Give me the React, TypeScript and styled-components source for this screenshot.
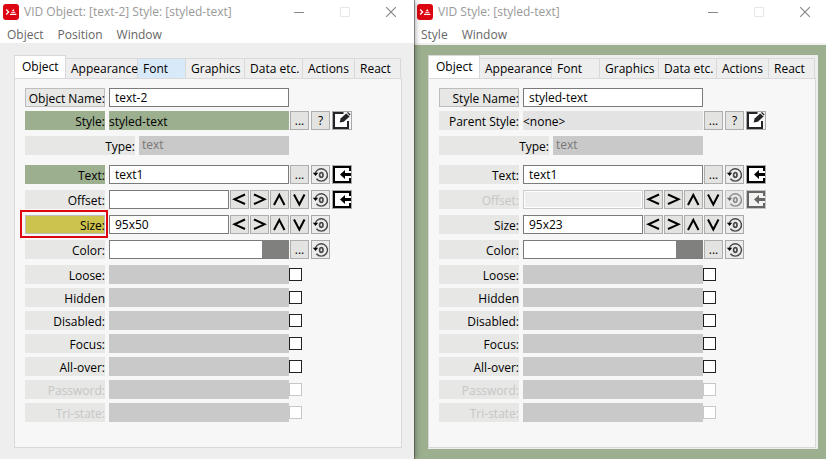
import React from "react";
import styled, { createGlobalStyle, css } from "styled-components";

const GREEN = "#9caf8f";
const FONT = '"Open Sans", "Noto Sans", sans-serif';

const GlobalStyle = createGlobalStyle`
  *, *::before, *::after { box-sizing: border-box; }
  body {
    margin: 0;
    font-family: ${FONT};
    font-size: 12px;
    line-height: 16px;
    color: #000;
    background: ${GREEN};
  }
  button, input { font: inherit; color: inherit; margin: 0; padding: 0; border-radius: 0; }
`;

const Desktop = styled.div`
  display: flex;
  min-height: 100vh;
  overflow: hidden;
`;

const Window = styled.section<{ $tint?: boolean; $grow: number }>`
  display: flex;
  flex-direction: column;
  flex: ${(p) => p.$grow} 1 0;
  min-width: 0;
  background: ${(p) => (p.$tint ? GREEN : "#eeeeee")};
  ${(p) =>
    !p.$tint &&
    css`
      z-index: 1;
      box-shadow: 1px 0 0 rgba(60, 60, 60, 0.5), 1px 0 6px rgba(0, 0, 0, 0.4);
    `}
`;

const TitleBar = styled.header`
  display: flex;
  align-items: center;
  height: 24px;
  padding-left: 3px;
  background: #fff;
`;

const Title = styled.h1`
  flex: 1;
  margin: 0 0 0 5px;
  font-size: 12px;
  font-weight: 400;
  line-height: 24px;
  color: #999;
  white-space: nowrap;
`;

const WindowButton = styled.button`
  display: grid;
  place-items: center;
  width: 46px;
  height: 24px;
  border: 0;
  background: none;
`;

const WindowButtons = styled.div<{ $bleed: number }>`
  display: flex;
  margin-right: -${(p) => p.$bleed}px;
`;

const MenuBar = styled.nav<{ $height: number }>`
  display: flex;
  gap: 14px;
  height: ${(p) => p.$height}px;
  padding-left: 7px;
  background: #fff;
  border-bottom: ${(p) => p.$height - 19}px solid #f0f0f0;
`;

const MenuItem = styled.button`
  height: 21px;
  border: 0;
  background: none;
  color: #666;
  line-height: 21px;
`;

const TabControl = styled.div<{ $tint?: boolean }>`
  margin: ${(p) => (p.$tint ? "10px 8px 10px 14px" : "12px 12px 11px 14px")};
  padding: ${(p) => (p.$tint ? "0 2px 1px 0" : "0")};
  background: #eeeeee;
`;

const TabList = styled.div`
  display: grid;
  grid-template-columns: 52fr 72fr 48fr 59fr 58fr 52fr 46fr;
  align-items: end;
  height: 23px;
  margin-right: 1px;
`;

const Tab = styled.button<{ $active?: boolean; $hot?: boolean }>`
  min-width: 0;
  height: ${(p) => (p.$active ? 23 : 20)}px;
  padding: 0 0 0 ${(p) => (p.$active ? 7 : 5)}px;
  border: 1px solid #d9d9d9;
  border-bottom: 0;
  border-left-width: ${(p) => (p.$active ? 1 : 0)}px;
  background: ${(p) => (p.$active ? "#fff" : p.$hot ? "#d8eaf9" : "#eeeeee")};
  text-align: left;
  line-height: 20px;
  white-space: nowrap;
`;

const Panel = styled.form`
  padding: 9px 49px 25px 10px;
  border: 1px solid #d9d9d9;
  background: #f7f7f7;
`;

const Row = styled.div<{ $gap?: number }>`
  display: flex;
  height: 19px;
  margin-bottom: ${(p) => p.$gap ?? 4}px;
`;

const Label = styled.label<{ $tone?: string; $framed?: boolean; $wide?: boolean; $off?: boolean }>`
  position: relative;
  flex: none;
  width: ${(p) => (p.$wide ? 110 : 80)}px;
  margin-right: 4px;
  background: ${(p) => p.$tone ?? "#e7e7e5"};
  box-shadow: ${(p) => (p.$framed ? "inset 0 0 0 1px #bdbdbd" : "none")};
  color: ${(p) => (p.$off ? "#c6c6c6" : "#000")};
  text-align: right;
  line-height: 21px;
  white-space: nowrap;
`;

const Highlight = styled.span`
  position: absolute;
  inset: -5px -3px -4px -5px;
  border: 2px solid #dd0510;
`;

const Input = styled.input<{ $tone?: string; $muted?: boolean }>`
  flex: 1;
  min-width: 0;
  height: 19px;
  padding: 0 0 0 5px;
  border: 1px solid #7a7a7a;
  background: #fff;
  line-height: 17px;
  &:disabled {
    border-color: #cccccc;
    background: #eeeeee;
    box-shadow: inset 0 0 0 1px #fff;
  }
  ${(p) =>
    p.$tone &&
    css`
      border: 0;
      padding: 2px 0 0;
      background: ${p.$tone};
    `}
  ${(p) =>
    p.$muted &&
    css`
      padding: 0 0 3px 3px;
      color: #777;
    `}
`;

const Swatch = styled.button`
  flex: none;
  width: 27px;
  height: 19px;
  margin-left: -1px;
  border: 0;
  border-bottom: 1px solid #7a7a7a;
  background: #80807e;
`;

const Bar = styled.div`
  flex: 1;
  background: #c9c9c9;
`;

const Check = styled.input`
  appearance: none;
  flex: none;
  align-self: center;
  width: 13px;
  height: 13px;
  margin-right: 50px;
  border: 1px solid #222;
  background: #fff;
  &:disabled { border-color: #c8c8c8; }
`;

const Actions = styled.div<{ $short?: boolean }>`
  display: flex;
  flex: none;
  gap: 2px;
  width: ${(p) => (p.$short ? 42 : 63)}px;
  padding-left: 1px;
`;

const Arrows = styled.div`
  display: flex;
  flex: none;
  gap: 1px;
  padding-left: 1px;
  padding-right: 1px;
`;

const ToolButton = styled.button<{ $wide?: boolean }>`
  display: grid;
  place-items: center;
  width: ${(p) => (p.$wide ? 20 : 19)}px;
  height: 19px;
  border: 1px solid #adadad;
  background: #e3e3e2;
  line-height: 17px;
  svg { display: block; }
  &:disabled svg { opacity: 0.55; }
`;

const IconButton = styled(ToolButton)`
  border: 0;
`;

const Logo = () => (
  <svg width="16" height="16" viewBox="0 0 16 16" aria-hidden="true">
    <rect width="16" height="16" rx="3" fill="#dc0512" />
    <path d="M3.2 5.5 5.6 8 3.2 10.5" fill="none" stroke="#fff" strokeWidth="1.3" />
    <path d="M10.2 5 11.4 7H9ZM8.6 7.8h3.3l.6 1H8ZM7.4 9.7h5.6l.6 1.2H6.8Z" fill="#fff" />
  </svg>
);

const EditIcon = () => (
  <svg width="20" height="19" viewBox="0 0 20 19" aria-hidden="true">
    <rect x=".5" y=".5" width="19" height="18" fill="#f4f4f4" stroke="#a8a8a8" />
    <path d="M11.5 2H2v15h14v-7" fill="#fff" stroke="#252529" strokeWidth="2" />
    <path d="M7.6 11.6 8.6 7.6 14.2 2.4 17.6 5.4 11.8 10.8Z" fill="#252529" />
    <path d="m15 1.8 1-.9 2.6 2.5-.9 1Z" fill="#252529" />
  </svg>
);

const ResetIcon = () => (
  <svg width="19" height="19" viewBox="0 0 19 19" aria-hidden="true">
    <rect x=".5" y=".5" width="18" height="18" fill="#ececec" stroke="#a8a8a8" />
    <path d="M4.2 8.6a6.2 6.2 0 1 1 1.2 5.2" fill="none" stroke="#4a4a4a" strokeWidth="1.4" />
    <ellipse cx="10.3" cy="10" rx="1.7" ry="2.3" fill="none" stroke="#4a4a4a" strokeWidth="1.7" />
    <path d="M1.8 7.8h5.4L4.6 11Z" fill="#000" />
  </svg>
);

const ImportIcon = () => (
  <svg width="20" height="19" viewBox="0 0 20 19" aria-hidden="true">
    <rect x=".5" y=".5" width="19" height="18" fill="#fff" stroke="#a8a8a8" />
    <path d="M18 6V2H2v15h16v-4" fill="#fff" stroke="#000" strokeWidth="2" />
    <path d="M8 9.5 13 5v3h6v3h-6v3Z" fill="#000" />
  </svg>
);

const ARROWS: [string, string][] = [
  ["Left", "M15 4.5 4.5 9.3 15 14"],
  ["Right", "M4 4.5 14.5 9.3 4 14"],
  ["Up", "M4 15 9.3 5 14.5 15"],
  ["Down", "M4 4.5 9.3 14.5 14.5 4.5"],
];

const ArrowSet = () => (
  <Arrows>
    {ARROWS.map(([name, d]) => (
      <ToolButton type="button" key={name} aria-label={name}>
        <svg width="17" height="17" viewBox="1 1 17 17" aria-hidden="true">
          <path d={d} fill="none" stroke="#000" strokeWidth="2" />
        </svg>
      </ToolButton>
    ))}
  </Arrows>
);

const Reset = ({ disabled }: { disabled?: boolean }) => (
  <IconButton type="button" aria-label="Reset" disabled={disabled}>
    <ResetIcon />
  </IconButton>
);

const Import = ({ disabled }: { disabled?: boolean }) => (
  <IconButton type="button" aria-label="Import" $wide disabled={disabled}>
    <ImportIcon />
  </IconButton>
);

const TABS = ["Object", "Appearance", "Font", "Graphics", "Data etc.", "Actions", "React"];

const FLAGS = ["Loose:", "Hidden", "Disabled:", "Focus:", "All-over:", "Password:", "Tri-state:"];

interface InspectorProps {
  id: string;
  tint?: boolean;
  title: string;
  menus: string[];
  nameLabel: string;
  name: string;
  parentLabel: string;
  parent: string;
  size: string;
}

const Inspector = ({ id, tint, title, menus, nameLabel, name, parentLabel, parent, size }: InspectorProps) => (
  <Window $tint={tint} $grow={tint ? 412 : 414}>
    <TitleBar>
      <Logo />
      <Title>{title}</Title>
      <WindowButtons $bleed={tint ? 2 : 0}>
        <WindowButton type="button" aria-label="Minimize">
          <svg width="10" height="10" aria-hidden="true"><path d="M0 5.5h10" stroke="#888" /></svg>
        </WindowButton>
        <WindowButton type="button" aria-label="Maximize">
          <svg width="10" height="10" aria-hidden="true"><path d="M.5.5h9v9h-9z" fill="none" stroke="#e6e6e6" /></svg>
        </WindowButton>
        <WindowButton type="button" aria-label="Close">
          <svg width="10" height="10" aria-hidden="true"><path d="m0 0 10 10M10 0 0 10" stroke="#888" strokeWidth="1.2" /></svg>
        </WindowButton>
      </WindowButtons>
    </TitleBar>
    <MenuBar $height={tint ? 21 : 19}>
      {menus.map((m) => (
        <MenuItem type="button" key={m}>{m}</MenuItem>
      ))}
    </MenuBar>
    <TabControl $tint={tint}>
      <TabList role="tablist">
        {TABS.map((t, i) => (
          <Tab
            type="button"
            role="tab"
            key={t}
            aria-selected={i === 0}
            $active={i === 0}
            $hot={!tint && t === "Font"}
          >
            {t}
          </Tab>
        ))}
      </TabList>
      <Panel>
        <Row>
          <Label htmlFor={id + "name"} $framed>{nameLabel}</Label>
          <Input id={id + "name"} defaultValue={name} />
          <Actions />
        </Row>
        <Row $gap={6}>
          <Label htmlFor={id + "style"} $tone={tint ? undefined : GREEN}>{parentLabel}</Label>
          <Input id={id + "style"} readOnly value={parent} $tone={tint ? "#e3e3e3" : GREEN} />
          <Actions>
            <ToolButton type="button" aria-label="Browse styles">...</ToolButton>
            <ToolButton type="button" aria-label="Help">?</ToolButton>
            <IconButton type="button" aria-label="Edit" $wide><EditIcon /></IconButton>
          </Actions>
        </Row>
        <Row $gap={10}>
          <Label htmlFor={id + "type"} $wide>Type:</Label>
          <Input id={id + "type"} readOnly value="text" $tone="#c9c9c9" $muted />
          <Actions />
        </Row>
        <Row $gap={6}>
          <Label htmlFor={id + "text"} $tone={tint ? undefined : GREEN}>Text:</Label>
          <Input id={id + "text"} defaultValue="text1" />
          <Actions>
            <ToolButton type="button" aria-label="Edit text">...</ToolButton>
            <Reset />
            <Import />
          </Actions>
        </Row>
        <Row $gap={6}>
          <Label htmlFor={id + "offset"} $off={tint}>Offset:</Label>
          <Input id={id + "offset"} disabled={tint} />
          <ArrowSet />
          <Actions $short>
            <Reset disabled={tint} />
            <Import disabled={tint} />
          </Actions>
        </Row>
        <Row $gap={6}>
          <Label htmlFor={id + "size"} $tone={tint ? undefined : "#ccc24e"} $framed={!tint}>
            Size:{!tint && <Highlight />}
          </Label>
          <Input id={id + "size"} defaultValue={size} />
          <ArrowSet />
          <Actions $short>
            <Reset />
          </Actions>
        </Row>
        <Row $gap={6}>
          <Label htmlFor={id + "color"}>Color:</Label>
          <Input id={id + "color"} />
          <Swatch type="button" aria-label="Pick color" />
          <Actions>
            <ToolButton type="button" aria-label="Edit color">...</ToolButton>
            <Reset />
          </Actions>
        </Row>
        {FLAGS.map((f, i) => (
          <Row key={f} $gap={i === FLAGS.length - 1 ? 0 : 4}>
            <Label htmlFor={id + f} $off={i > 4}>{f}</Label>
            <Bar />
            <Check type="checkbox" id={id + f} disabled={i > 4} />
          </Row>
        ))}
      </Panel>
    </TabControl>
  </Window>
);

export default function App() {
  return (
    <>
      <GlobalStyle />
      <Desktop>
        <Inspector
          id="object-"
          title="VID Object: [text-2] Style: [styled-text]"
          menus={["Object", "Position", "Window"]}
          nameLabel="Object Name:"
          name="text-2"
          parentLabel="Style:"
          parent="styled-text"
          size="95x50"
        />
        <Inspector
          id="style-"
          tint
          title="VID Style: [styled-text]"
          menus={["Style", "Window"]}
          nameLabel="Style Name:"
          name="styled-text"
          parentLabel="Parent Style:"
          parent="<none>"
          size="95x23"
        />
      </Desktop>
    </>
  );
}
